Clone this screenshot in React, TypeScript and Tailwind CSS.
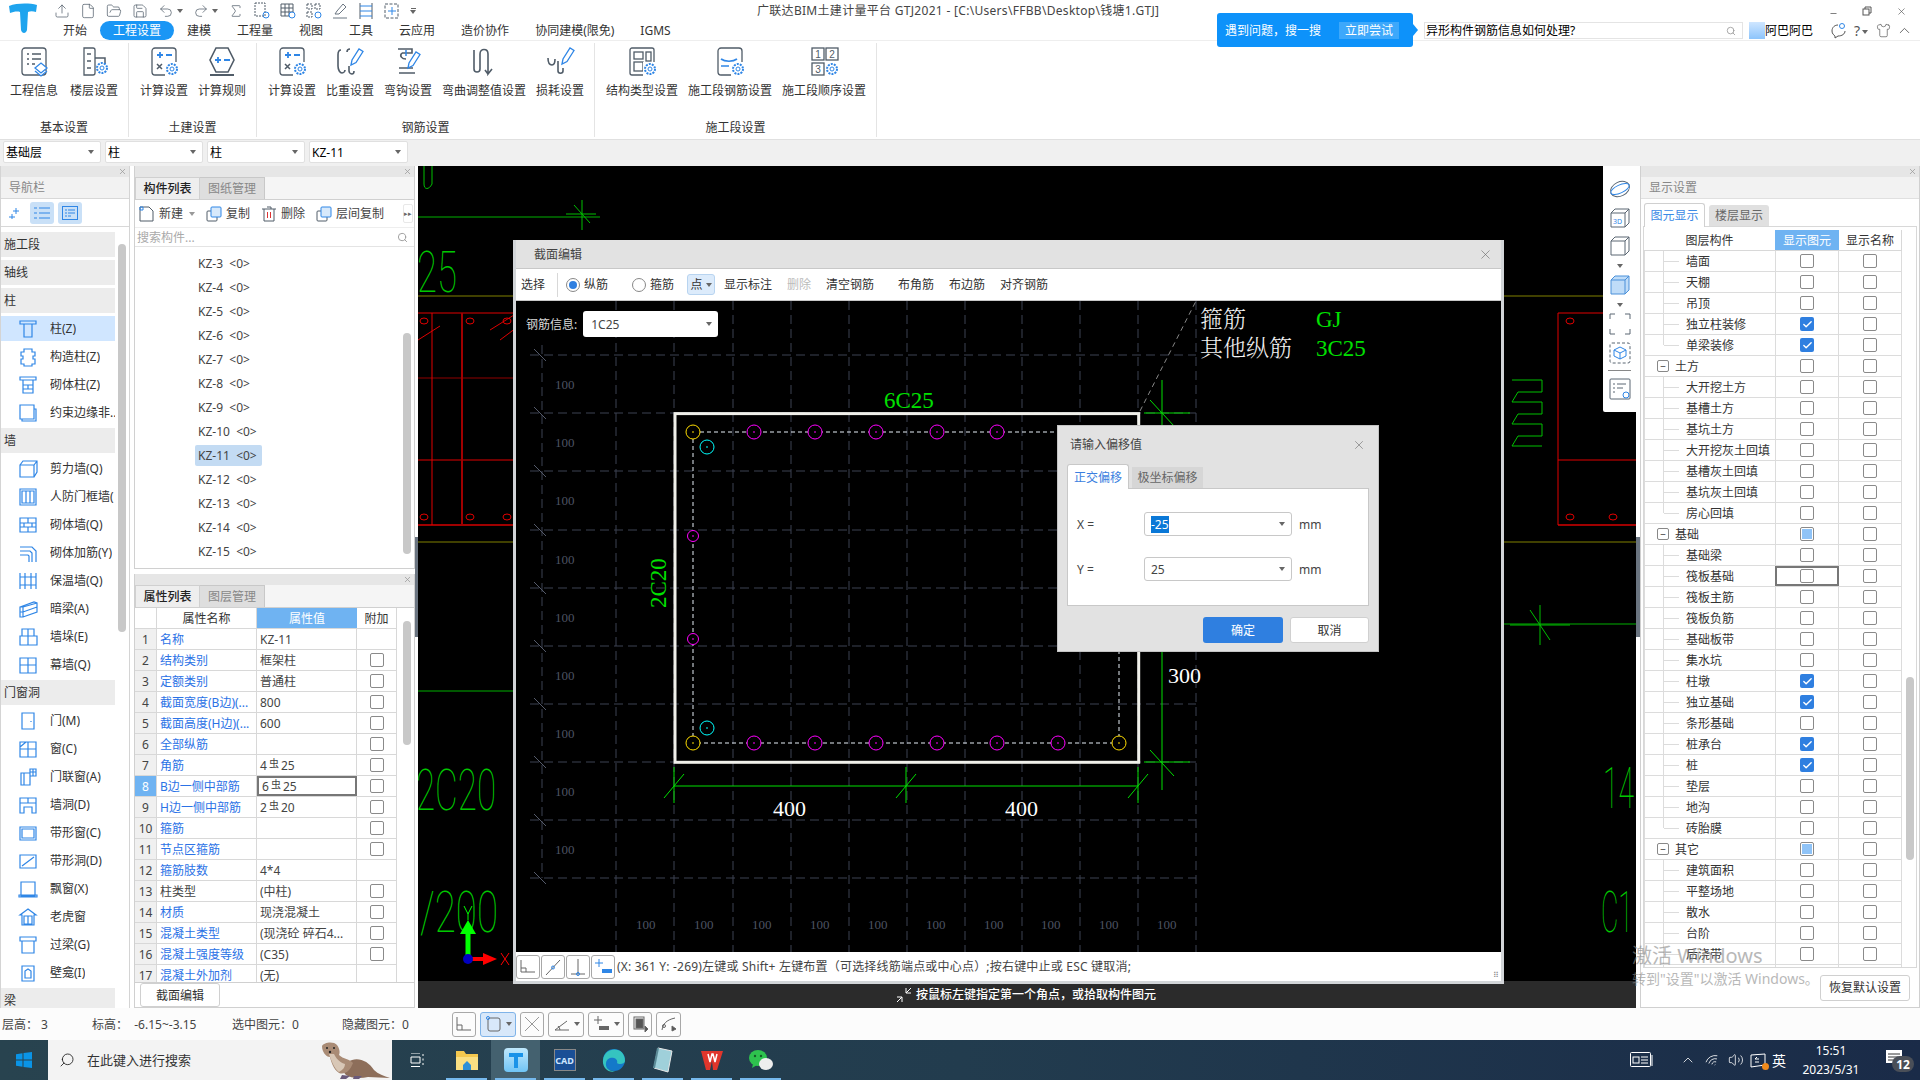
import type { ReactNode } from "react";
import {
  Check, ChevronUp, File, FolderOpen, Minus, Redo2, Save, Search, Shirt, Sigma, Undo2, Upload, Volume2, Wifi, X,
} from "lucide-react";

const BLUE = "#2f86e6";
const INK = "#505c68";

function Caret({ color = "#666" }: { color?: string }) {
  return <span className="inline-block h-0 w-0 border-x-[3px] border-t-[4px] border-x-transparent" style={{ borderTopColor: color }} />;
}

// small blue gear used on most ribbon icons
function Gear({ x, y }: { x: number; y: number }) {
  return (
    <g stroke={BLUE} fill="none">
      <circle cx={x} cy={y} r="5" strokeWidth="2" strokeDasharray="2 1.1" />
      <circle cx={x} cy={y} r="2" strokeWidth="1" />
    </g>
  );
}

function Pencil({ x, y }: { x: number; y: number }) {
  return <path d={`M${x} ${y + 16}l1 -5l7 -11l4 2.500l-7 11z`} stroke={BLUE} strokeWidth="1.300" fill="none" />;
}

const Sheet = () => <rect x="3" y="2" width="24" height="27" rx="3" />;
const CalcMarks = () => (
  <>
    <path d="M8 9h6M11 6v6M17 9h6" stroke={BLUE} strokeWidth="1.800" />
    <path d="M8 18l5 5M13 18l-5 5" strokeWidth="1.500" />
  </>
);
const Num = ({ x, y, t }: { x: number; y: number; t: string }) => (
  <text x={x} y={y} fontSize="10" fill={INK} stroke="none" textAnchor="middle" fontFamily="'Liberation Sans',sans-serif">{t}</text>
);

const ribbonIcons: Record<string, ReactNode> = {
  info: (<><Sheet /><path d="M8 8h2M13 8h9M8 13h2M13 13h9M8 18h2M13 18h3" strokeWidth="1.600" /><path d="M16 22l6 -5l6 5l-6 5zM16 25l6 5l6 -5" stroke={BLUE} fill="#fff" /></>),
  floors: (<><path d="M5 2h9a2 2 0 0 1 2 2v23a2 2 0 0 1 -2 2h-9z" /><path d="M16 12h10v6M8 8h4M8 15h4M8 22h4" strokeWidth="1.500" /><Gear x={23} y={22} /></>),
  calc: (<><Sheet /><CalcMarks /><rect x="16" y="16" width="14" height="14" fill="#fff" stroke="none" /><Gear x={23} y={23} /></>),
  rule: (<><path d="M9 2h12l6 12l-6 12h-12l-6 -12z" strokeWidth="1.600" /><path d="M8 14h6M11 11v6M17 14h6" stroke={BLUE} strokeWidth="1.800" /><path d="M3 29h24" strokeWidth="2" /></>),
  ratio: (<><path d="M6 4c-3 0 -3 3 -3 5v11c0 4 2 7 4 7s3 -2 3 -3M15 3c-2 0 -3 1 -3 3M14 20v5c0 2 2 3 3 3s2 -1 2 -3" strokeWidth="1.600" /><Pencil x={16} y={3} /></>),
  hook: (<><path d="M5 3h14v4h-10M9 7c-3 3 0 6 4 6M6 27h16M6 22h14" strokeWidth="1.600" /><path d="M13 4v6" stroke={BLUE} strokeWidth="1.500" /><Pencil x={15} y={6} /></>),
  bend: (<path d="M5 4v19c0 4 6 4 6 0v-15c0 -6 8 -6 8 0v20l4 -5M19 28l-3 -4" strokeWidth="1.600" />),
  loss: (<><path d="M3 12c0 5 2 7 4 7s3 -2 3 -6M13 15v10c0 3 5 3 5 0v-3" strokeWidth="1.600" /><Pencil x={17} y={2} /></>),
  struct: (<><rect x="3" y="2" width="24" height="27" rx="2" /><rect x="7" y="6" width="9" height="7" /><rect x="19" y="6" width="5" height="9" /><rect x="7" y="16" width="9" height="9" /><rect x="16" y="16" width="14" height="14" fill="#fff" stroke="none" /><Gear x={23} y={23} /></>),
  rebar: (<><Sheet /><path d="M6 13c4 3 12 3 16 0M6 20h8" stroke={BLUE} strokeWidth="1.600" /><rect x="16" y="16" width="14" height="14" fill="#fff" stroke="none" /><Gear x={23} y={23} /></>),
  order: (<><rect x="3" y="2" width="12" height="12" /><rect x="17" y="2" width="12" height="12" /><rect x="3" y="17" width="12" height="12" /><Num x={9} y={12} t="1" /><Num x={23} y={12} t="2" /><Num x={9} y={27} t="3" /><Gear x={23} y={23} /></>),
};

const ribbonGroups = [
  { label: "基本设置", width: "w-[129px]", pad: "pl-[4px]", items: [["info", "工程信息", "w-[60px]"], ["floors", "楼层设置", "w-[60px]"]] },
  { label: "土建设置", width: "w-[128px]", pad: "pl-[6px]", items: [["calc", "计算设置", "w-[58px]"], ["rule", "计算规则", "w-[58px]"]] },
  { label: "钢筋设置", width: "w-[338px]", pad: "pl-[6px]", items: [["calc", "计算设置", "w-[58px]"], ["ratio", "比重设置", "w-[58px]"], ["hook", "弯钩设置", "w-[58px]"], ["bend", "弯曲调整值设置", "w-[94px]"], ["loss", "损耗设置", "w-[58px]"]] },
  { label: "施工段设置", width: "w-[282px]", pad: "pl-[5px]", items: [["struct", "结构类型设置", "w-[84px] mr-[4px]"], ["rebar", "施工段钢筋设置", "w-[84px] mr-[10px]"], ["order", "施工段顺序设置", "w-[84px]"]] },
];

const tabs = ["开始", "工程设置", "建模", "工程量", "视图", "工具", "云应用", "造价协作", "协同建模(限免)", "IGMS"];

function QuickBox({ children }: { children: ReactNode }) {
  return (
    <svg width="16" height="18" viewBox="0 0 16 18" fill="none" stroke={INK} strokeWidth="1">
      {children}
    </svg>
  );
}

function QuickAccess() {
  const p = { size: 16, strokeWidth: 1.1, color: INK };
  return (
    <div className="flex w-[707px] items-center gap-[10px] pl-[4px]">
      <Upload {...p} />
      <File {...p} />
      <FolderOpen {...p} />
      <Save {...p} />
      <Undo2 {...p} className="-mr-[7px]" />
      <Caret />
      <Redo2 {...p} className="-mr-[7px]" />
      <Caret />
      <Sigma {...p} />
      <QuickBox><rect x="1" y="1" width="10" height="13" strokeDasharray="2 1" /><circle cx="12" cy="13" r="3" stroke={BLUE} /></QuickBox>
      <QuickBox><path d="M1 2h12v12h-12zM1 6h12M1 10h12M5 2v12M9 2v12" /><circle cx="12" cy="13" r="3" stroke={BLUE} fill="#fff" /></QuickBox>
      <QuickBox><path d="M1 2h5v5h-5zM9 2h5v5h-5zM1 10h5v5h-5z" strokeDasharray="2 1" /><circle cx="12" cy="13" r="3" stroke={BLUE} /></QuickBox>
      <QuickBox><path d="M3 12l2 -3l6 -7l3 3l-7 7zM1 16h14" stroke="#6b7682" /></QuickBox>
      <QuickBox><path d="M2 1v16M14 1v16" stroke={INK} /><path d="M2 4h12M2 9h12M2 14h12" stroke={BLUE} /></QuickBox>
      <QuickBox><rect x="1" y="2" width="13" height="14" strokeDasharray="3 1.500" /><path d="M8 5v8M4 9h8" stroke={BLUE} /></QuickBox>
      <span className="flex flex-col items-center gap-[1px]"><span className="h-px w-[5px] bg-[#666]" /><Caret /></span>
    </div>
  );
}

function Header() {
  return (
    <div className="relative z-10 shrink-0 bg-white">
      <div className="flex h-[41px] border-b border-[#eeeeee]">
        <div className="relative w-[50px]">
          <svg className="absolute left-[8px] top-[3px]" width="30" height="31" viewBox="0 0 30 31">
            <path d="M1 3c8 -3 20 -3 28 -1l-1 7c-3 -1 -6 -1 -8 0l-1 18c-1 4 -5 4 -6 0l-1 -18c-3 -1 -7 0 -10 1z" fill="#1ea4ee" />
          </svg>
        </div>
        <div className="flex w-[1167px] flex-col">
          <div className="flex h-[22px] items-center">
            <QuickAccess />
            <span className="whitespace-nowrap tracking-[0.3px] text-[#444]">广联达BIM土建计量平台 GTJ2021 - [C:\Users\FFBB\Desktop\钱塘1.GTJ]</span>
          </div>
          <div className="flex h-[19px] items-center text-[#333]">
            {tabs.map((t) => (
              <span key={t} className={`h-[19px] whitespace-nowrap rounded-full px-[13px] leading-[19px] ${t === "工程设置" ? "bg-[#1a96f5] text-white" : ""}`}>{t}</span>
            ))}
          </div>
        </div>
        {/* promo + search */}
        <div className="relative mt-[13px] flex h-[34px] w-[196px] shrink-0 items-center rounded-[3px] bg-[#0d92fa] pl-[8px] text-white">
          <span className="w-[114px]">遇到问题，搜一搜</span>
          <span className="flex h-[17px] w-[60px] items-center justify-center bg-[#3da8fb]">立即尝试</span>
          <span className="absolute -right-[5px] top-[11px] h-0 w-0 border-y-[6px] border-l-[5px] border-y-transparent border-l-[#0d92fa]" />
        </div>
        <div className="ml-[11px] flex flex-1 flex-col">
          <div className="flex h-[22px] items-center justify-end gap-[24px] pr-[13px] text-[#555]">
            <Minus size={9} strokeWidth={2} className="translate-y-[2px]" />
            <svg width="10" height="10" viewBox="0 0 10 10" fill="none" stroke="#555"><rect x="1" y="3" width="6" height="6" /><path d="M3 3v-2h6v6h-2" /></svg>
            <X size={11} strokeWidth={1.400} />
          </div>
          <div className="flex h-[17px] items-center">
            <div className="flex h-[17px] w-[319px] items-center justify-between border border-[#e4e4e4] pl-[1px] pr-[6px] text-black">
              <span>异形构件钢筋信息如何处理?</span>
              <Search size={10} color="#999" />
            </div>
            <span className="ml-[6px] h-[17px] w-[16px] bg-gradient-to-b from-[#cfe6ff] to-[#8cc4fb]" />
            <span className="text-black">阿巴阿巴</span>
            <svg className="ml-[18px]" width="15" height="16" viewBox="0 0 15 16" fill="none" stroke="#555"><path d="M7 2c-3 0 -6 2 -6 6c0 3 2 4 3 5v2l3 -2c4 0 7 -2 7 -5" /><circle cx="11" cy="3" r="2.500" stroke={BLUE} /></svg>
            <span className="ml-[8px] text-[14px] text-[#555]">?</span>
            <span className="ml-[2px] -translate-y-[1px]"><Caret /></span>
            <Shirt size={15} strokeWidth={1.100} color="#555" className="ml-[8px]" />
            <ChevronUp size={17} strokeWidth={1.100} color="#444" className="ml-[5px]" />
          </div>
        </div>
      </div>
      <div className="flex h-[98px] pt-[2px]">
        {ribbonGroups.map((g) => (
          <div key={g.label} className={`flex ${g.width} h-[94px] flex-col border-r border-[#e4e4e4]`}>
            <div className={`flex ${g.pad} pt-[3px]`}>
              {g.items.map(([icon, text, w], i) => (
                <div key={i} className={`flex ${w} flex-col items-center`}>
                  <svg width="30" height="32" viewBox="0 0 30 32" fill="none" stroke={INK} strokeWidth="1.300">{ribbonIcons[icon]}</svg>
                  <span className="mt-[4px] whitespace-nowrap text-[#333]">{text}</span>
                </div>
              ))}
            </div>
            <div className="mt-auto pb-[1px] text-center text-[#333]">{g.label}</div>
          </div>
        ))}
      </div>
    </div>
  );
}

function SelectorBar() {
  return (
    <div className="flex h-[27px] shrink-0 items-start gap-[4px] border-t border-[#e0e0e0] bg-[#f0f0f0] pl-[3px] pt-[1px]">
      {[["基础层", "w-[98px]"], ["柱", "w-[98px]"], ["柱", "w-[98px]"], ["KZ-11", "w-[99px]"]].map(([t, w], i) => (
        <div key={i} className={`flex ${w} h-[22px] items-center justify-between rounded-[2px] border border-[#e0e0e0] bg-white pl-[2px] pr-[6px]`}>
          <span>{t}</span>
          <Caret />
        </div>
      ))}
    </div>
  );
}

function PanelBar() {
  return (
    <div className="flex h-[11px] shrink-0 items-center justify-end bg-[#e6e6e6] pr-[2px]">
      <X size={9} color="#999" />
    </div>
  );
}

/* -------- navigation ---------- */
function NavIcon({ d, fill }: { d: string; fill?: boolean }) {
  return (
    <svg width="20" height="20" viewBox="0 0 20 20" fill={fill ? "#cfe3f9" : "none"} stroke={BLUE} strokeWidth="1.200" className="shrink-0">
      <path d={d} />
    </svg>
  );
}

const navRows: [string, string?][] = [
  ["施工段"], ["轴线"], ["柱"],
  ["柱(Z)", "M2 2h16v3h-16zM6 5h8v13h-8z"],
  ["构造柱(Z)", "M6 2h8v3h3v4h-2v3h2v5h-3v2h-8v-2h-3v-5h2v-3h-2v-4h3z"],
  ["砌体柱(Z)", "M2 2h16v3h-16zM5 5h10v13h-10zM5 10h10M5 14h10M10 10v4"],
  ["约束边缘非...", "M2 2h14v14h-14zM16 6h2v12h-14v-2"],
  ["墙"],
  ["剪力墙(Q)", "M2 6h14v12h-14zM2 6l3 -4h14v11l-3 5M16 6l3 -4"],
  ["人防门框墙(", "M2 2h16v16h-16zM4 4h12v12h-12zM8 4v12M12 4v12"],
  ["砌体墙(Q)", "M2 3h16v14h-16zM2 8h16M2 12h16M10 3v5M6 8v4M14 8v4M10 12v5"],
  ["砌体加筋(Y)", "M2 4h12l4 4v11M2 8h10l2 2v9M2 12h8l1 1v6"],
  ["保温墙(Q)", "M2 2v16M7 2v16M13 2v16M18 2v16M2 6h16M2 14h16"],
  ["暗梁(A)", "M2 8l14 -5l3 1v9l-14 5h-3zM2 8h3v10M5 8l14 -4M2 13h3l14 -5"],
  ["墙垛(E)", "M4 2h12v7h3v9h-17v-9h2zM2 9h17M10 2v16"],
  ["幕墙(Q)", "M2 3h16v15h-16zM2 10h16M10 3v15"],
  ["门窗洞"],
  ["门(M)", "M4 2h12v16h-12zM13 10v1"],
  ["窗(C)", "M2 3h16v15h-16zM2 10h16M10 3v15M2 8l6 -5"],
  ["门联窗(A)", "M3 6h9v12h-9zM6 6v12M12 2h6v7h-6zM15 2v7M12 5h6"],
  ["墙洞(D)", "M2 3h16v15h-4v-6h-8v6h-4zM2 8h16M10 3v5"],
  ["带形窗(C)", "M2 4h16v13h-16zM4 6h12v9h-12z"],
  ["带形洞(D)", "M2 4h16v13h-16zM4 15l12 -9"],
  ["飘窗(X)", "M3 3h14v14h-14zM1 16h18v2h-18z"],
  ["老虎窗", "M10 2l8 6h-2v10h-12v-10h-2zM6 9h8v8h-8zM10 9v8"],
  ["过梁(G)", "M2 2h16v4h-16zM4 6h12v12h-12z"],
  ["壁龛(I)", "M4 3h12v15h-12zM7 15v-7l3 -2l3 2v7z"],
  ["梁"],
];

function NavPanel() {
  return (
    <div className="flex w-[130px] shrink-0 flex-col overflow-hidden border-x border-[#d4d4d4] bg-white">
      <PanelBar />
      <div className="flex h-[22px] shrink-0 items-center border-b border-[#d8d8d8] bg-[#f2f2f2] pl-[8px] text-[#888]">导航栏</div>
      <div className="flex h-[28px] shrink-0 items-center border-b border-[#d8d8d8] pl-[8px]">
        <svg width="12" height="12" viewBox="0 0 12 12" stroke={BLUE} strokeWidth="1"><path d="M7 1v6M4 4h6M3 7v5M0 10h6" /></svg>
        <span className="ml-[9px] flex h-[22px] w-[24px] items-center justify-center rounded-[3px] bg-[#c9e0f7]">
          <svg width="16" height="14" viewBox="0 0 16 14" fill="none" stroke={BLUE}><path d="M0 2h3M5 2h11M0 7h3M5 7h11M0 12h3M5 12h11" /></svg>
        </span>
        <span className="ml-[4px] flex h-[22px] w-[24px] items-center justify-center rounded-[3px] bg-[#c9e0f7]">
          <svg width="16" height="14" viewBox="0 0 16 14" fill="none" stroke={BLUE}><rect x="0.500" y="0.500" width="15" height="13" /><path d="M3 4h2M6 4h7M3 7h2M6 7h7M3 10h2M6 10h3" /></svg>
        </span>
      </div>
      <div className="flex min-h-0 flex-1 overflow-hidden">
        <div className="flex w-[114px] shrink-0 flex-col gap-[3px] pt-[5px]">
          {navRows.map(([t, d]) =>
            d ? (
              <div key={t} className={`flex h-[25px] shrink-0 items-center whitespace-nowrap pl-[17px] text-[#333] ${t === "柱(Z)" ? "bg-[#d0e6ff]" : ""}`}>
                <NavIcon d={d} />
                <span className="ml-[12px] overflow-hidden">{t}</span>
              </div>
            ) : (
              <div key={t} className="flex h-[25px] shrink-0 items-center bg-[#ececec] pl-[3px] text-[#333]">{t}</div>
            ),
          )}
        </div>
        <div className="ml-[3px] mt-[17px] h-[388px] w-[8px] shrink-0 rounded-full bg-[#c8c8c8]" />
      </div>
    </div>
  );
}

/* -------- component list + properties ---------- */
function PanelTabs({ a, b }: { a: string; b: string }) {
  return (
    <div className="flex h-[23px] shrink-0 border-b border-[#d0d0d0] bg-[#f5f5f5]">
      <span className="flex w-[65px] items-center justify-center border-x border-t border-[#d0d0d0] bg-[#eeeeee] font-medium text-[#222]">{a}</span>
      <span className="flex w-[65px] items-center justify-center border-r border-t border-[#c8c8c8] bg-[#dedede] text-[#888]">{b}</span>
    </div>
  );
}

function ToolAction({ text, icon }: { text: string; icon: ReactNode }) {
  return (
    <span className="flex items-center gap-[4px] text-[#444]">
      <svg width="16" height="16" viewBox="0 0 16 16" fill="none" stroke={INK}>{icon}</svg>
      {text}
    </span>
  );
}

const Dup = () => (<><rect x="1" y="5" width="10" height="10" rx="1" /><rect x="5" y="1" width="10" height="10" rx="1" fill="#d7e9fb" stroke={BLUE} /></>);

function ComponentList() {
  const names = ["KZ-3", "KZ-4", "KZ-5", "KZ-6", "KZ-7", "KZ-8", "KZ-9", "KZ-10", "KZ-11", "KZ-12", "KZ-13", "KZ-14", "KZ-15"];
  return (
    <div className="flex h-[403px] shrink-0 flex-col border-x border-b border-[#d0d0d0]">
      <PanelBar />
      <PanelTabs a="构件列表" b="图纸管理" />
      <div className="flex h-[28px] shrink-0 items-center gap-[11px] border-b border-[#eeeeee] pl-[4px]">
        <span className="flex items-center gap-[6px]">
          <ToolAction text="新建" icon={<><path d="M1 1h9l4 4v10h-13z" /><path d="M1 1h3v3h-3z" stroke={BLUE} /></>} />
          <Caret color="#999" />
        </span>
        <ToolAction text="复制" icon={<Dup />} />
        <ToolAction text="删除" icon={<><path d="M1 3h14M3 3v12h10v-12M6 1h4v2" /><path d="M6.500 6v6M9.500 6v6" stroke="#d33" /></>} />
        <ToolAction text="层间复制" icon={<Dup />} />
        <span className="ml-auto mr-[1px] flex h-[19px] w-[10px] items-center justify-center rounded-[2px] border border-[#e8e8e8] text-[7px] text-[#666]">▸▸</span>
      </div>
      <div className="flex h-[19px] shrink-0 items-center justify-between border-b border-[#e4e4e4] pl-[2px] pr-[6px] text-[#aaa]">
        <span>搜索构件...</span>
        <Search size={11} color="#999" />
      </div>
      <div className="relative flex min-h-0 flex-1 flex-col pl-[60px] pt-[4px]">
        {names.map((n) => (
          <div key={n} className="flex h-[24px] shrink-0 items-center">
            <span className={`whitespace-pre rounded-[2px] px-[3px] text-[#444] ${n === "KZ-11" ? "bg-[#c3dbf3] py-[2px] pr-[5px]" : ""}`}>{n}  {"<0>"}</span>
          </div>
        ))}
        <span className="absolute left-[268px] top-[86px] h-[221px] w-[8px] rounded-full bg-[#c8c8c8]" />
      </div>
    </div>
  );
}

function Cb({ state = 0 }: { state?: number }) {
  if (state === 1)
    return (
      <span className="flex h-[14px] w-[14px] items-center justify-center rounded-[2px] bg-[#2f7fe0]">
        <Check size={11} strokeWidth={3} color="#fff" />
      </span>
    );
  if (state === 2)
    return (
      <span className="flex h-[14px] w-[14px] items-center justify-center rounded-[2px] border border-[#8a8a8a] bg-white">
        <span className="h-[10px] w-[10px] bg-[#8fc3f7]" />
      </span>
    );
  return <span className="h-[14px] w-[14px] rounded-[2px] border border-[#8a8a8a] bg-white" />;
}

const Rebar = ({ a, b }: { a: string; b: string }) => (
  <>
    {a}
    <span className="mx-[2px] inline-block -translate-y-[2px] text-[10px]">虫</span>
    {b}
  </>
);

const props: [number, string, ReactNode, boolean][] = [
  [1, "名称", "KZ-11", false],
  [2, "结构类别", "框架柱", true],
  [3, "定额类别", "普通柱", true],
  [4, "截面宽度(B边)(...", "800", true],
  [5, "截面高度(H边)(...", "600", true],
  [6, "全部纵筋", "", true],
  [7, "角筋", <Rebar a="4" b="25" />, true],
  [8, "B边一侧中部筋", <Rebar a="6" b="25" />, true],
  [9, "H边一侧中部筋", <Rebar a="2" b="20" />, true],
  [10, "箍筋", "", true],
  [11, "节点区箍筋", "", true],
  [12, "箍筋肢数", "4*4", false],
  [13, "柱类型", "(中柱)", true],
  [14, "材质", "现浇混凝土", true],
  [15, "混凝土类型", "(现浇砼 碎石4...", true],
  [16, "混凝土强度等级", "(C35)", true],
  [17, "混凝土外加剂", "(无)", false],
];

function PropertyList() {
  return (
    <div className="mt-[5px] flex min-h-0 flex-1 flex-col border-x border-b border-[#d0d0d0]">
      <PanelBar />
      <PanelTabs a="属性列表" b="图层管理" />
      <div className="flex h-[375px] shrink-0 border-b border-[#d0d0d0]">
        <div className="w-[262px] shrink-0 overflow-hidden">
          <div className="flex h-[21px] border-b border-[#d8d8d8]">
            <span className="w-[22px] border-r border-[#d8d8d8]" />
            <span className="flex w-[100px] items-center justify-center border-r border-[#d8d8d8] text-[#333]">属性名称</span>
            <span className="flex w-[100px] items-center justify-center bg-[#6fb3f2] text-white">属性值</span>
            <span className="flex w-[40px] items-center justify-center border-r border-[#d8d8d8] text-[#333]">附加</span>
          </div>
          {props.map(([n, name, value, cb]) => (
            <div key={n} className="flex h-[21px] border-b border-[#d8d8d8]">
              <span className={`flex w-[22px] items-center justify-center border-r border-[#d8d8d8] ${n === 8 ? "bg-[#6fb3f2] text-white" : "bg-[#f0f0f0] text-[#444]"}`}>{n}</span>
              <span className={`flex w-[100px] items-center overflow-hidden whitespace-nowrap border-r border-[#d8d8d8] pl-[3px] ${n === 13 ? "text-[#444]" : "text-[#2b72e6]"}`}>{name}</span>
              <span className={`flex w-[100px] items-center whitespace-nowrap pl-[3px] text-[#444] ${n === 8 ? "border-2 border-[#777] pl-[2px]" : "border-r border-[#d8d8d8]"}`}>{value}</span>
              <span className="flex w-[40px] items-center justify-center border-r border-[#d8d8d8]">{cb && <Cb />}</span>
            </div>
          ))}
        </div>
        <span className="ml-[6px] mt-[13px] h-[124px] w-[8px] rounded-full bg-[#c8c8c8]" />
      </div>
      <div className="flex flex-1 items-center pl-[5px]">
        <span className="flex h-[24px] w-[80px] items-center justify-center rounded-[3px] border border-[#d0d0d0] text-[#333]">截面编辑</span>
      </div>
    </div>
  );
}

/* -------- CAD canvas ---------- */
const GRID = "#3c4252";
const SERIF = "'Liberation Serif',serif";
const CadLabel = ({ x, y, t, w }: { x: number; y: number; t: string; w: number }) => (
  <text x={x} y={y} fill="#00c800" fontSize="58" fontFamily="Roboto,sans-serif" fontWeight="100" textLength={w} lengthAdjust="spacingAndGlyphs">{t}</text>
);

function BackgroundDrawing() {
  return (
    <svg className="absolute inset-0" width="1218" height="816" viewBox="418 166 1218 816">
      <path d="M418 217H600" stroke="#00b000" />
      <path d="M418 296H1636" stroke="#808000" />
      <path d="M418 542H1636" stroke="#808000" />
      <path d="M418 691H513" stroke="#00b000" />
      <path d="M1503 624H1636" stroke="#00b000" />
      <path d="M418 313H513M418 460H513M1558 313H1636M1558 460H1636" stroke="#e00000" />
      <path d="M418 378H513" stroke="#900000" />
      <path d="M418 525H513M1558 525H1636" stroke="#a00000" strokeWidth="2" />
      <path d="M432 313V525M1558 313V525" stroke="#e00000" />
      <path d="M462 313V525" stroke="#a00000" strokeWidth="2" />
      <path d="M418 340l22 -14M490 330l24 -15M500 340l20 -15" stroke="#e00000" />
      {[[424, 321], [470, 321], [507, 321], [424, 517], [470, 517], [507, 517], [1613, 517], [1570, 321], [1570, 517]].map(([x, y]) => (
        <ellipse key={x + y} cx={x} cy={y} rx="4" ry="3" fill="none" stroke="#e00000" />
      ))}
      <path d="M582 200v30M566 214h30M574 205l16 18" stroke="#00c000" />
      <path d="M1510 625h60M1540 605v40M1530 610l20 30" stroke="#00c000" />
      <path d="M1512 380h30v12h-24l-6 10h30v12h-24l-6 10h30v12h-24l-6 10h30" stroke="#00c000" fill="none" />
      <path d="M424 166v18c0 6 5 6 8 0v-18" stroke="#00c000" fill="none" />
      <CadLabel x={417} y={292} t="25" w={40} />
      <CadLabel x={416} y={810} t="2C20" w={80} />
      <CadLabel x={420} y={932} t="/200" w={78} />
      <CadLabel x={1603} y={808} t="14" w={31} />
      <CadLabel x={1601} y={932} t="C1" w={32} />
      <path d="M468 959V932" stroke="#00ff00" strokeWidth="5" />
      <path d="M468 920l-8 14h16z" fill="#00ff00" />
      <path d="M468 959h20" stroke="#ff0000" strokeWidth="4" />
      <path d="M497 959l-14 -6v12z" fill="#ff0000" />
      <ellipse cx="468" cy="959" rx="5" ry="5" fill="#0000c0" />
      <path d="M501 953l8 12M509 953l-8 12" stroke="#ff0000" />
      <path d="M464 906l4 8l4 -8M468 914v6" stroke="#00ff00" />
    </svg>
  );
}

function SectionDrawing() {
  const xs = [616, 674, 733, 791, 849, 907, 965, 1022, 1080, 1138, 1196];
  const ys = [355, 413, 471, 530, 588, 646, 704, 762, 820, 878];
  const topBars = [754, 815, 876, 937, 997];
  const botBars = [754, 815, 876, 937, 997, 1058];
  const bar = (x: number, y: number, c: string, r = 7) => (
    <g key={`${x}-${y}`}>
      <circle cx={x} cy={y} r={r} fill="#000" stroke={c} />
      <rect x={x - 1} y={y - 1} width="2" height="2" fill={c} opacity="0.500" />
    </g>
  );
  return (
    <svg className="block" width="985" height="651" viewBox="516 301 985 651">
      <g stroke={GRID} strokeDasharray="9 5">
        {xs.map((x) => <path key={x} d={`M${x} 301V952`} />)}
        {ys.map((y) => <path key={y} d={`M530 ${y}H1196`} />)}
        <path d="M542 345V878" />
      </g>
      {ys.map((y) => <path key={y} d={`M534 ${y - 6}l12 12`} stroke="#555b6b" />)}
      {[384, 442, 500, 559, 617, 675, 733, 791, 849].map((y) => (
        <text key={y} x="555" y={y + 5} fill="#4d5363" fontSize="13" fontFamily={SERIF}>100</text>
      ))}
      {[646, 704, 762, 820, 878, 936, 994, 1051, 1109, 1167].map((x) => (
        <text key={x} x={x - 10} y="929" fill="#4d5363" fontSize="13" fontFamily={SERIF}>100</text>
      ))}
      <path d="M1140 411L1196 301" stroke="#888" strokeDasharray="5 4" />
      <rect x="675" y="413.600" width="463.700" height="348.700" fill="none" stroke="#f0f0ea" strokeWidth="3" />
      <g stroke="#e6eef6" strokeDasharray="4 3">
        <path d="M693 432H1119V743H693z" fill="none" />
      </g>
      {topBars.map((x) => bar(x, 432, "#ff00ff"))}
      {botBars.map((x) => bar(x, 743, "#ff00ff"))}
      {[[693, 432], [693, 743], [1119, 743]].map(([x, y]) => bar(x, y, "#ffdd00"))}
      {[536, 639].map((y) => bar(693, y, "#ff00ff", 5.500))}
      {bar(707, 447, "#00ffff")}
      {bar(707, 728, "#00ffff")}
      {/* dimensions */}
      <path d="M674 786H1138M674 767v36M906 767v36M1138 767v36M664 798l20 -24M896 798l20 -24M1128 798l20 -24" stroke="#00e000" />
      <path d="M1162 380V790M1144 413H1190M1144 762H1190M1150 400l24 26M1150 750l24 26" stroke="#00e000" />
      <text x="773" y="816" fill="#fff" fontSize="22" fontFamily={SERIF}>400</text>
      <text x="1005" y="816" fill="#fff" fontSize="22" fontFamily={SERIF}>400</text>
      <text x="1168" y="683" fill="#fff" fontSize="22" fontFamily={SERIF}>300</text>
      <text x="884" y="408" fill="#00e000" fontSize="23" fontFamily={SERIF}>6C25</text>
      <text x="0" y="0" transform="translate(666 608) rotate(-90)" fill="#00e000" fontSize="23" fontFamily={SERIF}>2C20</text>
      <text x="1200" y="327" fill="#f2f2f2" fontSize="23" fontFamily="'Noto Serif CJK SC','Noto Sans CJK SC',serif" fontWeight="300">箍筋</text>
      <text x="1200" y="356" fill="#f2f2f2" fontSize="23" fontFamily="'Noto Serif CJK SC','Noto Sans CJK SC',serif" fontWeight="300">其他纵筋</text>
      <text x="1316" y="327" fill="#00e000" fontSize="23" fontFamily={SERIF}>GJ</text>
      <text x="1316" y="356" fill="#00e000" fontSize="23" fontFamily={SERIF}>3C25</text>
    </svg>
  );
}

function Sep() {
  return <span className="h-[24px] w-px shrink-0 bg-[#d8d8d8]" />;
}

function Radio({ on, text }: { on?: boolean; text: string }) {
  return (
    <span className="flex items-center gap-[4px]">
      <span className="flex h-[14px] w-[14px] items-center justify-center rounded-full border border-[#888] bg-white">
        {on && <span className="h-[8px] w-[8px] rounded-full bg-[#2f7fe0]" />}
      </span>
      <span>{text}</span>
    </span>
  );
}

function SnapButtons() {
  return (
    <div className="flex gap-[1px]">
      {[
        <path d="M3 3v12h14M3 11h5v4" />,
        <><path d="M3 18l14 -15" /><circle cx="10" cy="10.500" r="1.500" stroke={BLUE} /></>,
        <><path d="M10 2v15M3 17h14" /><circle cx="10" cy="17" r="1.500" stroke={BLUE} /></>,
        <><path d="M2 6h8M6 2v8" stroke={BLUE} /><rect x="9" y="12" width="10" height="4" fill={BLUE} stroke="none" /></>,
      ].map((c, i) => (
        <span key={i} className="flex h-[24px] w-[24px] items-center justify-center rounded-[3px] border border-[#a8a8a8]">
          <svg width="20" height="20" viewBox="0 0 20 20" fill="none" stroke="#666">{c}</svg>
        </span>
      ))}
    </div>
  );
}

function SectionDialog() {
  return (
    <div className="absolute left-[95px] top-[74px] flex h-[744px] w-[991px] flex-col border-x-[3px] border-b-[3px] border-[#d2d5d8] bg-black">
      <div className="flex h-[28px] shrink-0 items-center justify-between bg-[#e2e2e2] pl-[18px] pr-[8px] text-[#444]">
        <span>截面编辑</span>
        <X size={15} strokeWidth={1} color="#666" />
      </div>
      <div className="flex h-[33px] shrink-0 items-center border-y border-[#c8c8c8] bg-white pl-[5px] text-[#333]">
        <span className="w-[36px]">选择</span>
        <Sep />
        <span className="ml-[8px] w-[66px]"><Radio on text="纵筋" /></span>
        <Radio text="箍筋" />
        <span className="ml-[6px]"><Sep /></span>
        <span className="ml-[7px] flex h-[21px] w-[28px] items-center justify-center gap-[3px] rounded-[3px] border border-[#b8d4f0] bg-[#dcebfb]">点<Caret /></span>
        <span className="ml-[9px]">显示标注</span>
        <span className="ml-[15px] text-[#bbb]">删除</span>
        <span className="ml-[15px]">清空钢筋</span>
        <span className="ml-[12px]"><Sep /></span>
        <span className="ml-[12px]">布角筋</span>
        <span className="ml-[15px]">布边筋</span>
        <span className="ml-[15px]">对齐钢筋</span>
      </div>
      <div className="relative min-h-0 flex-1 overflow-hidden">
        <SectionDrawing />
        <div className="absolute left-[10px] top-[10px] flex items-center gap-[6px] text-[#d8d8d8]">
          <span>钢筋信息:</span>
          <span className="flex h-[26px] w-[135px] items-center justify-between rounded-[3px] bg-white pl-[8px] pr-[6px] text-[#444]">1C25<Caret /></span>
        </div>
      </div>
      <div className="flex h-[29px] shrink-0 items-center bg-white text-[#444]">
        <SnapButtons />
        <span className="ml-[2px] whitespace-nowrap tracking-[0.2px]">(X: 361 Y: -269)左键或 Shift+ 左键布置（可选择线筋端点或中心点）;按右键中止或 ESC 键取消;</span>
        <span className="ml-auto mr-[2px] self-end pb-[2px] text-[8px] leading-[8px] text-[#888]">⠿</span>
      </div>
    </div>
  );
}

function OffsetDialog() {
  const Row = ({ label, value, sel }: { label: string; value: string; sel?: boolean }) => (
    <div className="flex h-[24px] items-center text-[#444]">
      <span className="w-[76px] pl-[9px]">{label}</span>
      <span className="flex h-[24px] w-[148px] items-center justify-between rounded-[3px] border border-[#c8c8c8] pl-[6px] pr-[6px]">
        <span className={sel ? "bg-[#0a78d7] text-white" : ""}>{value}</span>
        <Caret />
      </span>
      <span className="ml-[7px]">mm</span>
    </div>
  );
  return (
    <div className="absolute left-[639px] top-[259px] flex h-[227px] w-[322px] flex-col border border-[#c4c4c4] bg-[#e2e2e2] px-[9px]">
      <div className="flex h-[37px] shrink-0 items-center justify-between pl-[3px] pr-[3px] text-[#444]">
        <span>请输入偏移值</span>
        <X size={14} strokeWidth={1} color="#666" />
      </div>
      <div className="relative z-10 flex h-[25px] shrink-0 items-end gap-[3px]">
        <span className="flex h-[25px] w-[62px] translate-y-px items-center justify-center rounded-t-[3px] border-x border-t border-[#c8c8c8] bg-white text-[#3b7fe0]">正交偏移</span>
        <span className="flex h-[21px] w-[71px] items-center justify-center bg-[#d6d6d6] text-[#666]">极坐标偏移</span>
      </div>
      <div className="flex h-[118px] shrink-0 flex-col gap-[21px] border border-[#c8c8c8] bg-white pt-[23px]">
        <Row label="X =" value="-25" sel />
        <Row label="Y =" value="25" />
      </div>
      <div className="mt-[11px] flex justify-end gap-[7px]">
        <span className="flex h-[26px] w-[80px] items-center justify-center rounded-[3px] bg-[#2f7fe0] text-white">确定</span>
        <span className="flex h-[26px] w-[79px] items-center justify-center rounded-[3px] border border-[#d0d0d0] bg-white text-[#333]">取消</span>
      </div>
    </div>
  );
}

function ViewStrip() {
  const S = ({ children }: { children: ReactNode }) => (
    <svg width="22" height="22" viewBox="0 0 22 22" fill="none" stroke="#5a6672" className="shrink-0">{children}</svg>
  );
  return (
    <div className="absolute right-0 top-0 flex h-[246px] w-[33px] flex-col items-center gap-[6.5px] rounded-bl-[2px] bg-white pt-[12px]">
      <S><ellipse cx="11" cy="11" rx="10" ry="7" transform="rotate(-25 11 11)" /><ellipse cx="11" cy="11" rx="10" ry="4" transform="rotate(-25 11 11)" stroke={BLUE} /></S>
      <S><path d="M2 6h14v14h-14zM2 6l4 -4h14v14l-4 4M16 6l4 -4" /><text x="4" y="17" fontSize="7" fill={BLUE} stroke="none">3D</text></S>
      <S><path d="M2 6h14v14h-14zM2 6l4 -4h14v14l-4 4M16 6l4 -4" /></S>
      <Caret />
      <S><path d="M2 6h14v14h-14zM2 6l4 -4h14v14l-4 4M16 6l4 -4" fill="#bfdcf8" stroke="#4a90d9" /></S>
      <Caret />
      <S><path d="M1 6v-5h5M16 1h5v5M21 16v5h-5M6 21h-5v-5" /></S>
      <S><rect x="1" y="1" width="20" height="20" rx="2" strokeDasharray="3 2" /><path d="M11 5l6 3v6l-6 3l-6 -3v-6zM5 8l6 3l6 -3M11 11v6" stroke={BLUE} /></S>
      <span className="h-px w-[23px] shrink-0 bg-[#888]" />
      <S><rect x="1" y="1" width="20" height="20" rx="1" /><path d="M4 6h2M8 6h9M4 10h2M8 10h6M4 14h2" /><circle cx="17" cy="17" r="3" stroke={BLUE} fill="#fff" /></S>
    </div>
  );
}

function CanvasArea() {
  return (
    <div className="flex w-[1218px] shrink-0 flex-col bg-white">
      <div className="relative min-h-0 flex-1 bg-black">
        <BackgroundDrawing />
        <ViewStrip />
        <SectionDialog />
        <OffsetDialog />
      </div>
      <div className="flex h-[27px] shrink-0 items-center justify-center gap-[4px] bg-[#2b2b2b] pr-[2px] font-medium text-white">
        <svg width="16" height="16" viewBox="0 0 16 16" fill="none" stroke="#fff"><path d="M1 15l5 -5M1 10h5v5M10 1v5h5M10 6l5 -5" /></svg>
        按鼠标左键指定第一个角点，或拾取构件图元
      </div>
    </div>
  );
}

function Splitter({ w }: { w: string }) {
  return (
    <span className={`flex ${w} shrink-0 items-center bg-white`}>
      <span className="h-[100px] w-full bg-[#6a7480]" />
    </span>
  );
}

/* -------- display settings ---------- */
const treeRows: [string, number, number?][] = [
  ["墙面", 0], ["天棚", 0], ["吊顶", 0], ["独立柱装修", 1], ["单梁装修", 1, 1],
  ["土方", 0, 2], ["大开挖土方", 0], ["基槽土方", 0], ["基坑土方", 0], ["大开挖灰土回填", 0], ["基槽灰土回填", 0], ["基坑灰土回填", 0], ["房心回填", 0, 1],
  ["基础", 2, 2], ["基础梁", 0], ["筏板基础", 0], ["筏板主筋", 0], ["筏板负筋", 0], ["基础板带", 0], ["集水坑", 0], ["柱墩", 1], ["独立基础", 1], ["条形基础", 0], ["桩承台", 1], ["桩", 1], ["垫层", 0], ["地沟", 0], ["砖胎膜", 0, 1],
  ["其它", 2, 2], ["建筑面积", 0], ["平整场地", 0], ["散水", 0], ["台阶", 0], ["后浇带", 0], ["", 0],
];

function DisplayPanel() {
  return (
    <div className="relative flex min-w-0 flex-1 flex-col border-x border-b border-[#d0d0d0] bg-white">
      <PanelBar />
      <div className="flex h-[22px] shrink-0 items-center border-b border-[#e0e0e0] bg-[#f2f2f2] pl-[8px] text-[#888]">显示设置</div>
      <div className="flex h-[27px] shrink-0 items-end gap-[4px] pl-[3px]">
        <span className="flex h-[24px] w-[61px] translate-y-px items-center justify-center rounded-t-[3px] border-x border-t border-[#d0d0d0] bg-white text-[#3b8ae6]">图元显示</span>
        <span className="flex h-[21px] w-[60px] items-center justify-center rounded-t-[3px] bg-[#e0e0e0] text-[#666]">楼层显示</span>
      </div>
      <div className="mx-[2px] flex h-[343px] flex-1 overflow-hidden border border-[#d8d8d8]">
        <div className="w-[258px] shrink-0 overflow-hidden">
          <div className="mt-[3px] flex h-[21px] border-b border-[#d8d8d8]">
            <span className="flex w-[131px] items-center justify-center text-[#333]">图层构件</span>
            <span className="flex w-[64px] items-center justify-center bg-[#6fb3f2] text-white">显示图元</span>
            <span className="flex w-[63px] items-center justify-center border-r border-[#d8d8d8] text-[#333]">显示名称</span>
          </div>
          {treeRows.map(([t, s, kind], i) => {
            const group = kind === 2;
            return (
              <div key={i} className="flex h-[21px] border-b border-[#dcdcdc]">
                <div className="flex w-[131px] items-center border-l border-[#dcdcdc] text-[#333]">
                  {group ? (
                    <>
                      <span className="ml-[12px] flex h-[12px] w-[12px] items-center justify-center rounded-[2px] border border-[#888] text-[10px] leading-none">−</span>
                      <span className="ml-[6px]">{t}</span>
                    </>
                  ) : (
                    <>
                      <span className={`ml-[18px] w-[17px] border-l border-[#dcdcdc] ${kind === 1 ? "h-[10px] -translate-y-[5px]" : "h-[21px]"} flex items-center`}>
                        <span className={`h-px w-[15px] bg-[#dcdcdc] ${kind === 1 ? "translate-y-[5px]" : ""}`} />
                      </span>
                      <span className="ml-[6px] whitespace-nowrap">{t}</span>
                    </>
                  )}
                </div>
                <span className={`flex w-[64px] items-center justify-center ${t === "筏板基础" ? "border-2 border-[#777]" : "border-x border-[#dcdcdc]"}`}><Cb state={s} /></span>
                <span className="flex w-[63px] items-center justify-center border-r border-[#dcdcdc]"><Cb /></span>
              </div>
            );
          })}
        </div>
        <span className="ml-[4px] mt-[450px] h-[183px] w-[8px] rounded-full bg-[#c8c8c8]" />
      </div>
      <div className="flex h-[39px] shrink-0 items-center justify-end pr-[9px]">
        <span className="flex h-[26px] w-[90px] items-center justify-center rounded-[3px] border border-[#d0d0d0] text-[#333]">恢复默认设置</span>
      </div>
      <div className="pointer-events-none absolute -left-[9px] top-[777px] whitespace-nowrap text-[#8a8a8a] opacity-60">
        <div className="text-[20px] leading-[26px]">激活 Windows</div>
        <div className="text-[14px] leading-[20px]">转到"设置"以激活 Windows。</div>
      </div>
    </div>
  );
}

/* -------- status + taskbar ---------- */
function StatusBar() {
  const Btn = ({ w, on, children, caret }: { w: string; on?: boolean; children: ReactNode; caret?: boolean }) => (
    <span className={`flex ${w} h-[25px] items-center justify-center gap-[3px] rounded-[3px] border ${on ? "border-[#7fb3e8] bg-[#d8e8fa]" : "border-[#a8a8a8]"}`}>
      <svg width="18" height="18" viewBox="0 0 18 18" fill="none" stroke="#666">{children}</svg>
      {caret && <Caret />}
    </span>
  );
  return (
    <div className="flex h-[32px] shrink-0 items-center bg-[#fcfcfc] pl-[2px] text-[#444]">
      <span className="w-[90px]">层高：  3</span>
      <span className="w-[140px] whitespace-pre">标高：  -6.15~-3.15</span>
      <span className="w-[110px]">选中图元：0</span>
      <span className="w-[110px]">隐藏图元：0</span>
      <div className="flex items-center gap-[4px]">
        <Btn w="w-[24px]"><path d="M2 2v13h14M2 10h5v5" /></Btn>
        <Btn w="w-[36px]" on caret><rect x="3" y="3" width="12" height="13" rx="2" /><circle cx="3" cy="3" r="1.500" stroke={BLUE} /></Btn>
        <Btn w="w-[24px]"><path d="M2 2l14 14M16 2l-14 14" stroke="#999" /></Btn>
        <Btn w="w-[36px]" caret><path d="M2 15l12 -9M2 15h14" /><path d="M7 15a6 6 0 0 0 -2 -4" /></Btn>
        <Btn w="w-[36px]" caret><path d="M1 5h8M5 1v8" /><rect x="6" y="11" width="10" height="4" fill="#666" stroke="none" /></Btn>
        <Btn w="w-[24px]"><rect x="3" y="2" width="10" height="12" /><rect x="5" y="4" width="7" height="9" fill="#555" /><path d="M14 11l3 3l-3 3z" fill="#555" /></Btn>
        <Btn w="w-[25px]"><path d="M2 15c1 -6 4 -10 13 -12" /><circle cx="4" cy="11" r="1.500" /><path d="M12 11l4 3l-4 2z" fill="#555" /></Btn>
      </div>
    </div>
  );
}

function Otter() {
  return (
    <svg width="72" height="40" viewBox="0 0 72 40" className="ml-auto shrink-0">
      <path d="M28 22c8 -6 20 -2 26 8c4 4 10 6 16 8l-22 -1c-8 2 -18 1 -22 -2c-4 -4 -4 -10 2 -13z" fill="#8d6e5a" />
      <path d="M2 6c2 -4 12 -5 15 -1c3 4 3 8 2 10c4 4 11 4 14 8c-3 8 -8 12 -14 10c-6 -4 -8 -12 -9 -16c-4 0 -8 -5 -8 -11z" fill="#a98b75" />
      <path d="M9 14c3 8 5 14 10 18c4 -2 6 -5 6 -8c-6 -2 -9 -6 -11 -10z" fill="#d8c7b6" />
      <circle cx="7" cy="8" r="1" fill="#222" /><circle cx="14" cy="8" r="1" fill="#222" /><circle cx="10" cy="12" r="1.200" fill="#222" />
      <path d="M22 35l8 1l-4 3h-6zM34 36l8 0l-3 3h-6z" fill="#6a5a7a" />
    </svg>
  );
}

function TaskIcon({ on, children }: { on?: boolean; children: ReactNode }) {
  return (
    <div className={`relative flex h-[40px] w-[49px] shrink-0 items-center justify-center ${on ? "bg-[#44616f]" : ""}`}>
      {children}
      <span className="absolute bottom-0 left-[4px] right-[4px] h-[2px] bg-[#76b9ed]" />
    </div>
  );
}

function Taskbar() {
  return (
    <div className="flex h-[40px] shrink-0 items-center bg-gradient-to-r from-[#28434f] via-[#223c4e] to-[#1a2b48] text-white">
      <div className="flex h-[40px] w-[48px] shrink-0 items-center justify-center">
        <svg width="16" height="16" viewBox="0 0 16 16" fill="#0a94e6"><path d="M0 2.300l6.500 -1v6.200h-6.500zM7.500 1.100l8.500 -1.100v7.500h-8.500zM0 8.500h6.500v6.200l-6.500 -1zM7.500 8.500h8.500v7.500l-8.500 -1.100z" /></svg>
      </div>
      <div className="flex h-[40px] w-[344px] shrink-0 items-center bg-[#f3f3f3] pl-[11px] text-[13px] text-[#333]">
        <Search size={16} strokeWidth={1.300} color="#222" className="-scale-x-100" />
        <span className="ml-[12px]">在此键入进行搜索</span>
        <Otter />
      </div>
      <div className="flex w-[50px] shrink-0 justify-center">
        <svg width="14" height="14" viewBox="0 0 14 14" fill="none" stroke="#fff"><path d="M1 0h9M1 13.500h9M1 4h9v6h-9zM13 1v2M13 5.500v2M13 10v2" /></svg>
      </div>
      <TaskIcon>
        <svg width="24" height="22" viewBox="0 0 24 22"><path d="M1 2h8l2 3h12v16h-22z" fill="#f4c84f" /><path d="M1 8h22v13h-22z" fill="#fadf82" /><path d="M8 16l4 -4l4 4v5h-8z" fill="#2c8fd8" /></svg>
      </TaskIcon>
      <TaskIcon on>
        <div className="flex h-[24px] w-[24px] items-center justify-center rounded-[4px] bg-gradient-to-b from-[#bfe8fc] to-[#6fc4f5]">
          <svg width="16" height="18" viewBox="0 0 16 18"><path d="M1 2h14v4h-5v11h-4v-11h-5z" fill="#1a93e8" /></svg>
        </div>
      </TaskIcon>
      <TaskIcon>
        <div className="flex h-[22px] w-[22px] items-center justify-center border border-[#888] bg-[#1a4f96] text-[9px] font-bold text-[#cfe6ff]">CAD</div>
      </TaskIcon>
      <TaskIcon>
        <svg width="24" height="24" viewBox="0 0 24 24"><circle cx="12" cy="12" r="11" fill="#1479c9" /><path d="M1 12c2 -14 22 -14 22 1c0 3 -6 4 -8 2c2 -6 -10 -8 -11 0c-1 6 5 9 10 8c-7 3 -14 -3 -13 -11z" fill="#35c4c0" /></svg>
      </TaskIcon>
      <TaskIcon>
        <svg width="24" height="26" viewBox="0 0 24 26"><path d="M7 1l14 3l-4 21l-14 -4z" fill="#9fd0da" stroke="#e8e8e8" /><path d="M3 21l4 -20" stroke="#5a8a96" strokeWidth="2" /></svg>
      </TaskIcon>
      <TaskIcon>
        <svg width="24" height="20" viewBox="0 0 24 20"><path d="M1 1h22l-6 19h-4l-1 -9l-2 9h-4z" fill="#e0362c" /><path d="M8 4l2 8l2 -8h1l2 8l2 -8" stroke="#fff" strokeWidth="1.500" fill="none" /></svg>
      </TaskIcon>
      <TaskIcon>
        <svg width="26" height="24" viewBox="0 0 26 24"><ellipse cx="10" cy="10" rx="9" ry="8" fill="#2ec24e" /><path d="M5 16l-1 4l5 -3z" fill="#2ec24e" /><ellipse cx="18" cy="16" rx="7" ry="6" fill="#eee" /><circle cx="7" cy="8" r="1.200" fill="#145c26" /><circle cx="13" cy="8" r="1.200" fill="#145c26" /></svg>
      </TaskIcon>
      <div className="ml-auto flex items-center">
        <svg width="24" height="16" viewBox="0 0 24 16" fill="none" stroke="#fff"><rect x="0.500" y="0.500" width="20" height="14" rx="1" /><rect x="3" y="5" width="6" height="6" /><path d="M11 5h7M11 8h7M11 11h7M22 3v11" /></svg>
        <ChevronUp size={16} strokeWidth={1.200} className="ml-[26px]" />
        <Wifi size={15} strokeWidth={1.200} className="ml-[9px] rotate-[-30deg]" />
        <Volume2 size={16} strokeWidth={1.200} className="ml-[8px]" />
        <span className="relative ml-[6px]">
          <svg width="16" height="15" viewBox="0 0 16 15" fill="none" stroke="#fff"><path d="M1 2l14 -1v11l-14 2zM5 6h4M5 6l2 -2M5 9h4" /></svg>
          <span className="absolute -bottom-[2px] -right-[3px] h-[7px] w-[7px] rounded-full bg-[#f08a1c]" />
        </span>
        <span className="ml-[6px] text-[14px]">英</span>
        <div className="ml-[10px] flex w-[70px] flex-col items-center text-[12px] leading-[19px]">
          <span>15:51</span>
          <span>2023/5/31</span>
        </div>
        <span className="relative ml-[20px] mr-[10px] h-[22px] w-[24px]">
          <svg className="absolute left-[0px] top-[1px]" width="16" height="14" viewBox="0 0 16 14"><path d="M0 0h16v13h-16z" fill="#fff" /><path d="M2 4h12M2 7h12M2 10h8" stroke="#333" /></svg>
          <span className="absolute left-[6px] top-[7px] flex h-[16px] w-[22px] items-center justify-center rounded-full bg-[#4a4f58] text-[12px] font-bold">12</span>
        </span>
      </div>
    </div>
  );
}

export default function App() {
  return (
    <div className="flex h-[1080px] w-[1920px] flex-col overflow-hidden bg-white text-[12px] leading-[17px] [font-family:'Noto_Sans','Noto_Sans_CJK_SC',sans-serif]">
      <Header />
      <SelectorBar />
      <div className="flex h-[842px] shrink-0">
        <NavPanel />
        <div className="ml-[4px] flex h-full w-[281px] shrink-0 flex-col">
          <ComponentList />
          <PropertyList />
        </div>
        <Splitter w="w-[3px]" />
        <CanvasArea />
        <Splitter w="w-[4px]" />
        <DisplayPanel />
      </div>
      <StatusBar />
      <Taskbar />
    </div>
  );
}
